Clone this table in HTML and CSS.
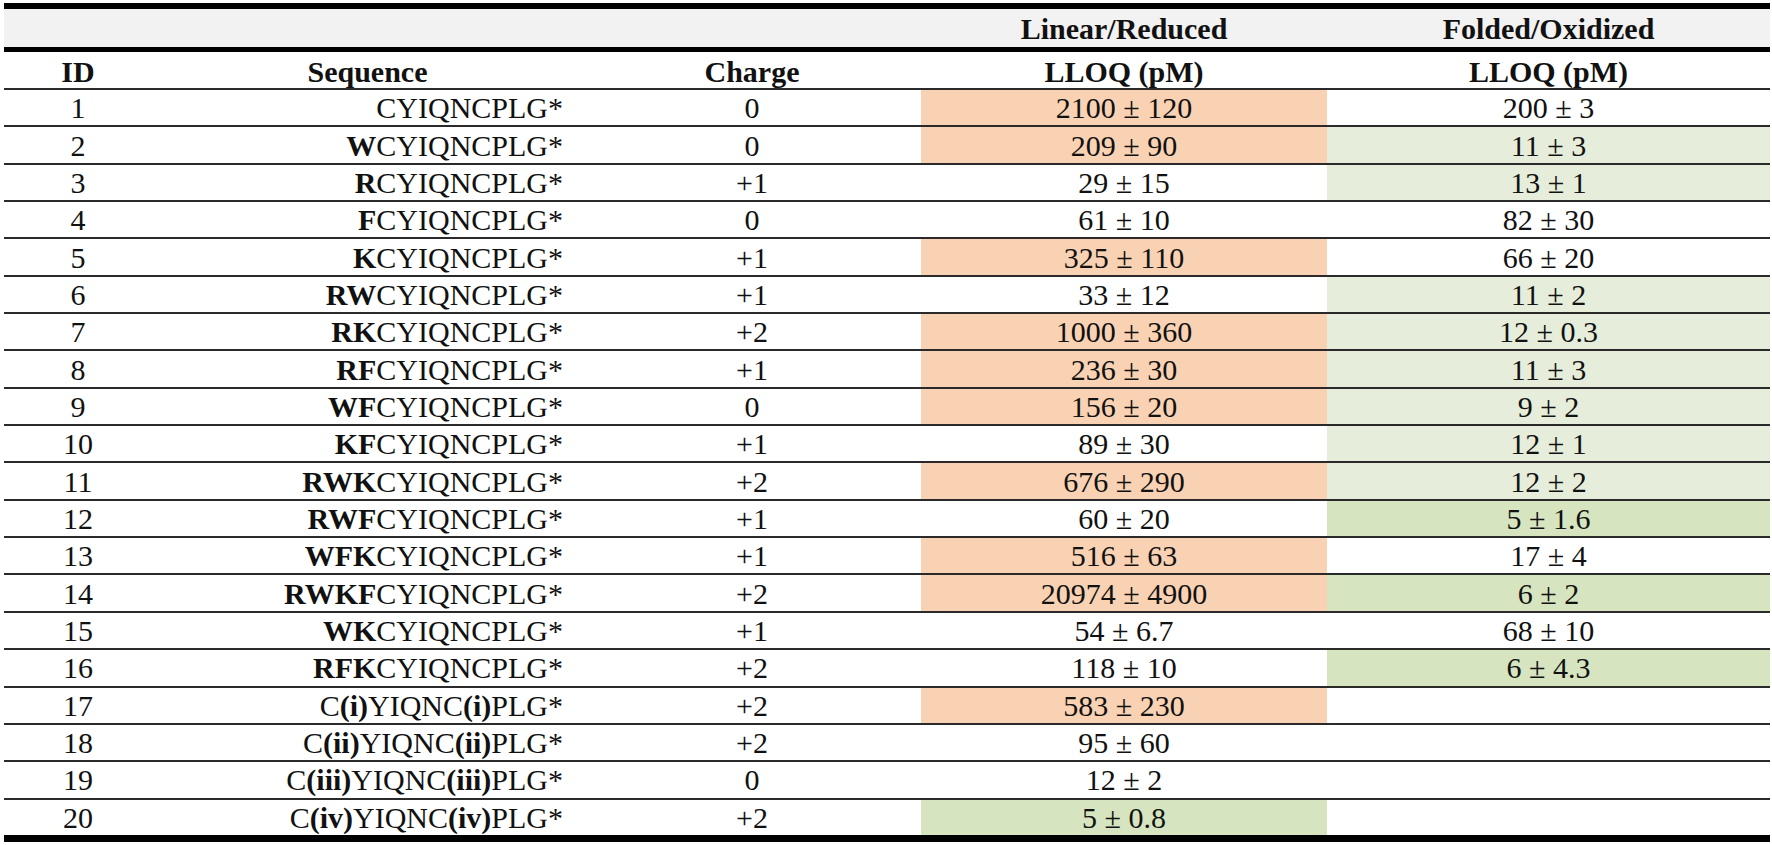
FILE: index.html
```html
<!DOCTYPE html>
<html>
<head>
<meta charset="utf-8">
<link rel="stylesheet" href="styles.css">
</head>
<body>
<table class="data">
  <colgroup>
    <col class="c-id"><col class="c-seq"><col class="c-chg"><col class="c-lin"><col class="c-fold">
  </colgroup>
  <thead>
    <tr class="group">
      <th></th><th></th><th></th><th>Linear/Reduced</th><th>Folded/Oxidized</th>
    </tr>
    <tr class="cols">
      <th>ID</th><th>Sequence</th><th>Charge</th><th>LLOQ (pM)</th><th>LLOQ (pM)</th>
    </tr>
  </thead>
  <tbody>
    <tr><td>1</td><td class="seq">CYIQNCPLG*</td><td>0</td><td class="or">2100 ± 120</td><td>200 ± 3</td></tr>
    <tr><td>2</td><td class="seq"><b>W</b>CYIQNCPLG*</td><td>0</td><td class="or">209 ± 90</td><td class="lg">11 ± 3</td></tr>
    <tr><td>3</td><td class="seq"><b>R</b>CYIQNCPLG*</td><td>+1</td><td>29 ± 15</td><td class="lg">13 ± 1</td></tr>
    <tr><td>4</td><td class="seq"><b>F</b>CYIQNCPLG*</td><td>0</td><td>61 ± 10</td><td>82 ± 30</td></tr>
    <tr><td>5</td><td class="seq"><b>K</b>CYIQNCPLG*</td><td>+1</td><td class="or">325 ± 110</td><td>66 ± 20</td></tr>
    <tr><td>6</td><td class="seq"><b>RW</b>CYIQNCPLG*</td><td>+1</td><td>33 ± 12</td><td class="lg">11 ± 2</td></tr>
    <tr><td>7</td><td class="seq"><b>RK</b>CYIQNCPLG*</td><td>+2</td><td class="or">1000 ± 360</td><td class="lg">12 ± 0.3</td></tr>
    <tr><td>8</td><td class="seq"><b>RF</b>CYIQNCPLG*</td><td>+1</td><td class="or">236 ± 30</td><td class="lg">11 ± 3</td></tr>
    <tr><td>9</td><td class="seq"><b>WF</b>CYIQNCPLG*</td><td>0</td><td class="or">156 ± 20</td><td class="lg">9 ± 2</td></tr>
    <tr><td>10</td><td class="seq"><b>KF</b>CYIQNCPLG*</td><td>+1</td><td>89 ± 30</td><td class="lg">12 ± 1</td></tr>
    <tr><td>11</td><td class="seq"><b>RWK</b>CYIQNCPLG*</td><td>+2</td><td class="or">676 ± 290</td><td class="lg">12 ± 2</td></tr>
    <tr><td>12</td><td class="seq"><b>RWF</b>CYIQNCPLG*</td><td>+1</td><td>60 ± 20</td><td class="dg">5 ± 1.6</td></tr>
    <tr><td>13</td><td class="seq"><b>WFK</b>CYIQNCPLG*</td><td>+1</td><td class="or">516 ± 63</td><td>17 ± 4</td></tr>
    <tr><td>14</td><td class="seq"><b>RWKF</b>CYIQNCPLG*</td><td>+2</td><td class="or">20974 ± 4900</td><td class="dg">6 ± 2</td></tr>
    <tr><td>15</td><td class="seq"><b>WK</b>CYIQNCPLG*</td><td>+1</td><td>54 ± 6.7</td><td>68 ± 10</td></tr>
    <tr><td>16</td><td class="seq"><b>RFK</b>CYIQNCPLG*</td><td>+2</td><td>118 ± 10</td><td class="dg">6 ± 4.3</td></tr>
    <tr><td>17</td><td class="seq">C<b>(i)</b>YIQNC<b>(i)</b>PLG*</td><td>+2</td><td class="or">583 ± 230</td><td></td></tr>
    <tr><td>18</td><td class="seq">C<b>(ii)</b>YIQNC<b>(ii)</b>PLG*</td><td>+2</td><td>95 ± 60</td><td></td></tr>
    <tr><td>19</td><td class="seq">C<b>(iii)</b>YIQNC<b>(iii)</b>PLG*</td><td>0</td><td>12 ± 2</td><td></td></tr>
    <tr class="last"><td>20</td><td class="seq">C<b>(iv)</b>YIQNC<b>(iv)</b>PLG*</td><td>+2</td><td class="dg">5 ± 0.8</td><td></td></tr>
  </tbody>
</table>
</body>
</html>
```

FILE: styles.css
```css
html, body {
  margin: 0;
  padding: 0;
  background: #ffffff;
}

.data {
  margin: 3px 0 0 4px;
  width: 1766px;
  table-layout: fixed;
  border-collapse: separate;
  border-spacing: 0;
  font-family: "Liberation Serif", "Times New Roman", serif;
  font-size: 30px;
  line-height: 1;
  color: #111;
}

.c-id { width: 148px; }
.c-seq { width: 431px; }
.c-chg { width: 338px; }
.c-lin { width: 406px; }
.c-fold { width: 443px; }

.data th, .data td {
  box-sizing: border-box;
  padding: 0;
  text-align: center;
  vertical-align: middle;
  white-space: nowrap;
}

.data th {
  font-weight: bold;
}

.group th {
  background: #f2f2f2;
  height: 49px;
  border-top: 6px solid #000;
  border-bottom: 5px solid #000;
  padding-top: 1px;
}

.cols th {
  height: 38px;
  border-bottom: 2px solid #2a2a2a;
  padding-top: 3px;
}

.data td {
  height: 37.35px;
  border-bottom: 2px solid #2a2a2a;
  padding-top: 1px;
}

.data tr.last td {
  height: 42.35px;
  border-bottom: 7px solid #000;
}

.data td.seq {
  text-align: right;
  padding-right: 20px;
}

.or { background: #f9d2b3; }
.lg { background: #e6eedb; }
.dg { background: #d7e4c0; }
```
